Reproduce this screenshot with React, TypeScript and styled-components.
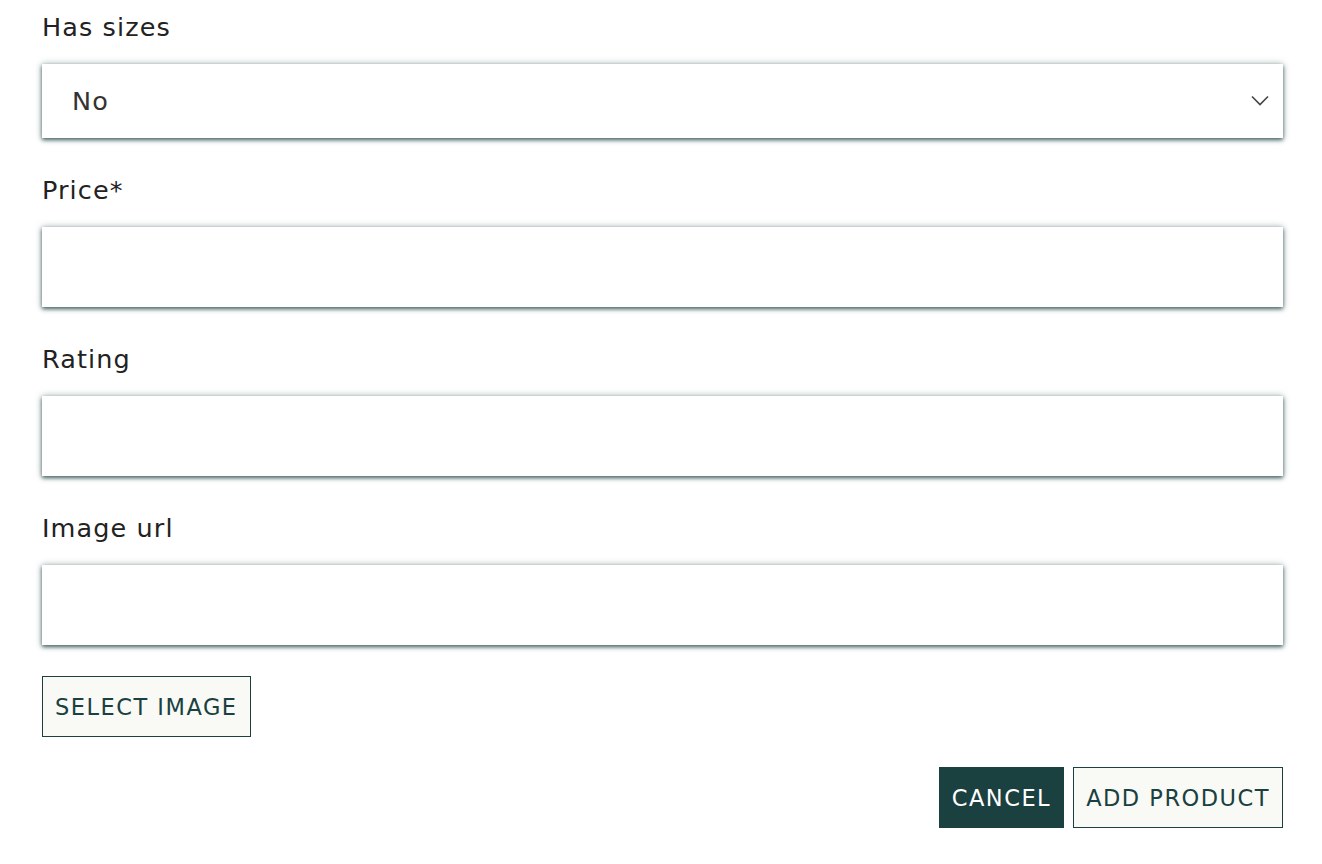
import React from "react";
import styled, { createGlobalStyle } from "styled-components";

const Global = createGlobalStyle`
  html, body { margin: 0; padding: 0; background: #ffffff; }
  body { font-family: "DejaVu Sans", "Noto Sans", sans-serif; }
`;

const Form = styled.form`
  box-sizing: border-box;
  width: 1322px;
  padding: 8px 39px 0 42px;
  display: flex;
  flex-direction: column;
`;

const Field = styled.div`
  display: flex;
  flex-direction: column;
  & + & { margin-top: 33px; }
`;

const Label = styled.label`
  font-size: 25.5px;
  line-height: 38px;
  letter-spacing: 1.1px;
  color: #222;
  margin-bottom: 18px;
`;

const boxStyles = `
  box-sizing: border-box;
  width: 100%;
  border: none;
  background: #fff;
  box-shadow: 0 2px 4px rgba(27, 64, 64, 0.75), 0 0 7px rgba(27, 64, 64, 0.35);
  font-family: inherit;
  font-size: 25.5px;
  letter-spacing: 1.1px;
  color: #333;
  outline: none;
`;

const Input = styled.input`
  ${boxStyles}
  height: 80px;
  padding: 0 30px;
`;

const SelectWrap = styled.div`
  position: relative;
`;

const Select = styled.select`
  ${boxStyles}
  height: 74px;
  padding: 0 30px;
  appearance: none;
`;

const Chevron = styled.svg`
  position: absolute;
  right: 14px;
  top: 31px;
  pointer-events: none;
`;

const Button = styled.button<{ $primary?: boolean }>`
  box-sizing: border-box;
  height: 61px;
  padding: 0 12px;
  border: 1px solid #1b4040;
  background: ${(p) => (p.$primary ? "#1b4040" : "#f9faf6")};
  color: ${(p) => (p.$primary ? "#ffffff" : "#1b4040")};
  font-family: inherit;
  font-size: 22.5px;
  letter-spacing: 1.5px;
  text-transform: uppercase;
  cursor: pointer;
`;

const SelectRow = styled.div`
  display: flex;
  margin-top: 31px;
`;

const Actions = styled.div`
  display: flex;
  justify-content: flex-end;
  gap: 9px;
  margin-top: 30px;
`;

export default function App() {
  return (
    <>
      <Global />
      <Form onSubmit={(e) => e.preventDefault()}>
        <Field>
          <Label>Has sizes</Label>
          <SelectWrap>
            <Select defaultValue="no">
              <option value="no">No</option>
              <option value="yes">Yes</option>
            </Select>
            <Chevron width="18" height="11" viewBox="0 0 18 11">
              <path d="M1 1.5 L9 9.5 L17 1.5" fill="none" stroke="#444" strokeWidth="1.6" />
            </Chevron>
          </SelectWrap>
        </Field>
        <Field>
          <Label>Price*</Label>
          <Input type="text" />
        </Field>
        <Field>
          <Label>Rating</Label>
          <Input type="text" />
        </Field>
        <Field>
          <Label>Image url</Label>
          <Input type="text" />
        </Field>
        <SelectRow>
          <Button type="button">Select image</Button>
        </SelectRow>
        <Actions>
          <Button type="button" $primary>Cancel</Button>
          <Button type="submit">Add product</Button>
        </Actions>
      </Form>
    </>
  );
}
